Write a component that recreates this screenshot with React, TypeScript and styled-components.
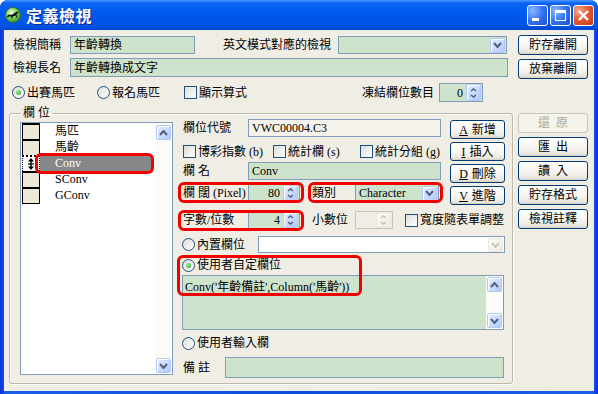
import React from "react";
import styled, { createGlobalStyle, css } from "styled-components";

const GREEN = "#cee3cc";
const FACE = "#f0ede4";
const EDGE = "#7f9db9";

const GlobalStyle = createGlobalStyle`
  * { box-sizing: border-box; }
  html, body { margin: 0; padding: 0; background: #ffffff; }
  body {
    font-family: "Liberation Serif", "Noto Sans CJK TC", serif;
    font-size: 12px;
    line-height: 14px;
    color: #000;
  }
`;

type ChevronProps = { dir: "up" | "down"; color?: string; small?: boolean };

const Chevron = ({ dir, color = "#4d6185", small }: ChevronProps) => {
  const w = small ? 7 : 9;
  const h = small ? 4 : 6;
  const d =
    dir === "down"
      ? `M1 1 L${w / 2} ${h - 1} L${w - 1} 1`
      : `M1 ${h - 1} L${w / 2} 1 L${w - 1} ${h - 1}`;
  return (
    <svg width={w} height={h} viewBox={`0 0 ${w} ${h}`}>
      <path d={d} fill="none" stroke={color} strokeWidth={small ? 1.6 : 2} />
    </svg>
  );
};

const AppIcon = () => (
  <svg width="16" height="16" viewBox="0 0 16 16">
    <defs>
      <radialGradient id="ic" cx="0.4" cy="0.35" r="0.7">
        <stop offset="0" stopColor="#f4ffd8" />
        <stop offset="0.5" stopColor="#7fd45a" />
        <stop offset="1" stopColor="#2f8a2a" />
      </radialGradient>
    </defs>
    <circle cx="8" cy="8" r="7.5" fill="url(#ic)" stroke="#3a6b2a" strokeWidth="0.8" />
    <path
      d="M2 9 L4 7.5 L6 8 L9 6.5 L11 5 L13 4.5 L13.5 6 L12 6.5 L11.5 8 L12.5 10.5 L11.5 10.5 L10.5 8.5 L8 9.5 L7 11.5 L6 11.5 L6.5 9.5 L4 9.5 L2.5 10.5 Z"
      fill="#111"
    />
  </svg>
);

const RowMarker = () => (
  <svg width="8" height="12" viewBox="0 0 8 12">
    <path d="M4 0 L7 3.5 L1 3.5 Z M4 12 L7 8.5 L1 8.5 Z" fill="#000" />
    <rect x="3.3" y="3" width="1.4" height="6" fill="#000" />
    <rect x="1" y="5.4" width="6" height="1.2" fill="#000" />
  </svg>
);

/* ---------- window chrome ---------- */

const Window = styled.div`
  width: 598px;
  height: 394px;
  display: flex;
  flex-direction: column;
  background: linear-gradient(90deg, #0831d9 0%, #1a5fe8 1%, #0a4fdc 50%, #1a5fe8 99%, #0831d9 100%);
  border-radius: 8px 8px 0 0;
  overflow: hidden;
`;

const TitleBar = styled.div`
  height: 30px;
  flex: none;
  display: flex;
  align-items: center;
  padding: 0 4px 0 5px;
  gap: 5px;
  background: linear-gradient(
    180deg,
    #4a9aff 0%,
    #0d63f3 10%,
    #0058ee 45%,
    #0055e6 85%,
    #0046d2 100%
  );
`;

const Title = styled.div`
  flex: 1;
  color: #fff;
  font-family: "Noto Sans CJK TC", sans-serif;
  font-weight: bold;
  font-size: 16px;
  line-height: 20px;
  letter-spacing: 0.5px;
  text-shadow: 1px 1px 0 #0b2590;
`;

const Caption = styled.div`
  display: flex;
  gap: 2px;
  margin-top: 1px;
`;

const CaptionButton = styled.div<{ $close?: boolean }>`
  width: 21px;
  height: 21px;
  border: 1px solid #fff;
  border-radius: 3px;
  display: flex;
  align-items: center;
  justify-content: center;
  background: ${(p) =>
    p.$close
      ? "radial-gradient(circle at 25% 25%, #f5a88a 0%, #e2582f 50%, #c33b12 100%)"
      : "radial-gradient(circle at 25% 25%, #8cb8ff 0%, #3573f2 50%, #1d4fd0 100%)"};
`;

const Client = styled.div`
  flex: 1;
  margin: 0 4px 3px 4px;
  background: ${FACE};
  display: flex;
`;

const MainCol = styled.div`
  width: 514px;
  flex: none;
  display: flex;
  flex-direction: column;
  padding: 6px 0 0 9px;
`;

const SideCol = styled.div`
  width: 70px;
  flex: none;
  display: flex;
  flex-direction: column;
  gap: 4px;
  padding-top: 5px;
`;

/* ---------- form parts ---------- */

const Row = styled.div<{ $h: number; $mt?: number }>`
  display: flex;
  align-items: center;
  height: ${(p) => p.$h}px;
  margin-top: ${(p) => p.$mt ?? 0}px;
  flex: none;
`;

const Label = styled.div<{ $w: number; $ml?: number; $pl?: number }>`
  width: ${(p) => p.$w}px;
  margin-left: ${(p) => p.$ml ?? 0}px;
  padding-left: ${(p) => p.$pl ?? 0}px;
  flex: none;
  white-space: nowrap;
`;

const Field = styled.div<{ $w: number; $h: number; $bg?: string; $edge?: string; $ml?: number }>`
  width: ${(p) => p.$w}px;
  height: ${(p) => p.$h}px;
  margin-left: ${(p) => p.$ml ?? 0}px;
  flex: none;
  border: 1px solid ${(p) => p.$edge ?? EDGE};
  background: ${(p) => p.$bg ?? GREEN};
  display: flex;
  align-items: center;
  padding: 0 1px 0 3px;
  white-space: nowrap;
  overflow: hidden;
`;

const FieldText = styled.span<{ $right?: boolean }>`
  flex: 1;
  text-align: ${(p) => (p.$right ? "right" : "left")};
  padding-right: ${(p) => (p.$right ? 3 : 0)}px;
`;

const XPArrowBox = styled.div<{ $w?: number; $h?: number; $disabled?: boolean }>`
  width: ${(p) => p.$w ?? 15}px;
  height: ${(p) => p.$h ?? 15}px;
  flex: none;
  border-radius: 2px;
  display: flex;
  flex-direction: column;
  align-items: center;
  justify-content: center;
  gap: 2px;
  ${(p) =>
    p.$disabled
      ? css`
          border: 1px solid #e8e6dd;
          background: linear-gradient(135deg, #fbfbf8, #edebe3);
        `
      : css`
          border: 1px solid #b4c8f6;
          background: linear-gradient(135deg, #e6eeff 0%, #c7d8fc 60%, #b4c9f7 100%);
          box-shadow: inset 1px 1px 0 #ffffff;
        `}
`;

type ComboProps = { w: number; h: number; value?: string; bg?: string; disabled?: boolean; ml?: number };

const Combo = ({ w, h, value, bg, disabled, ml }: ComboProps) => (
  <Field $w={w} $h={h} $bg={bg} $ml={ml}>
    <FieldText>{value}</FieldText>
    <XPArrowBox $h={h - 3} $disabled={disabled}>
      <Chevron dir="down" color={disabled ? "#c9c7ba" : "#4d6185"} />
    </XPArrowBox>
  </Field>
);

type SpinProps = { w: number; h: number; value?: string; disabled?: boolean; ml?: number };

const Spin = ({ w, h, value, disabled, ml }: SpinProps) => (
  <Field $w={w} $h={h} $ml={ml} $bg={disabled ? FACE : GREEN} $edge={disabled ? "#c9c7ba" : EDGE}>
    <FieldText $right>{value}</FieldText>
    <XPArrowBox $h={h - 2} $disabled={disabled}>
      <Chevron dir="up" small color={disabled ? "#c9c7ba" : "#4d6185"} />
      <Chevron dir="down" small color={disabled ? "#c9c7ba" : "#4d6185"} />
    </XPArrowBox>
  </Field>
);

const Choice = styled.div<{ $w?: number; $ml?: number }>`
  display: flex;
  align-items: center;
  gap: 2px;
  flex: none;
  width: ${(p) => (p.$w ? `${p.$w}px` : "auto")};
  margin-left: ${(p) => p.$ml ?? 0}px;
  white-space: nowrap;
`;

const RadioDot = styled.span<{ $checked?: boolean }>`
  width: 13px;
  height: 13px;
  flex: none;
  border-radius: 50%;
  border: 1px solid #1c5180;
  background: linear-gradient(135deg, #dcdcd7 0%, #ffffff 100%);
  display: flex;
  align-items: center;
  justify-content: center;
  &::after {
    content: "";
    width: 5px;
    height: 5px;
    border-radius: 50%;
    background: radial-gradient(circle at 35% 35%, #9ff09f, #21a121);
    display: ${(p) => (p.$checked ? "block" : "none")};
  }
`;

const CheckBox = styled.span`
  width: 13px;
  height: 13px;
  flex: none;
  border: 1px solid #1c5180;
  background: linear-gradient(135deg, #dcdcd7 0%, #ffffff 100%);
`;

const Button = styled.div<{ $w?: number; $h?: number; $disabled?: boolean }>`
  width: ${(p) => p.$w ?? 70}px;
  height: ${(p) => p.$h ?? 20}px;
  flex: none;
  border-radius: 3px;
  display: flex;
  align-items: center;
  justify-content: center;
  white-space: pre;
  ${(p) =>
    p.$disabled
      ? css`
          border: 1px solid #c9c7ba;
          background: #f5f4ea;
          color: #aca899;
        `
      : css`
          border: 1px solid #003c74;
          background: linear-gradient(180deg, #ffffff 0%, #f6f5f0 55%, #ebe8de 85%, #d8d2c6 100%);
          color: #000;
        `}
`;

const Mark = styled.div<{ $inset: string; $ml?: number }>`
  position: relative;
  display: flex;
  align-items: center;
  flex: none;
  margin-left: ${(p) => p.$ml ?? 0}px;
  &::after {
    content: "";
    position: absolute;
    inset: ${(p) => p.$inset};
    border: 3px solid #f20000;
    border-radius: 6px;
    pointer-events: none;
  }
`;

/* ---------- group box ---------- */

const Group = styled.fieldset`
  margin: 4px 0 0 -4px;
  width: 504px;
  height: 278px;
  border: 1px solid #bcb8aa;
  border-radius: 3px;
  box-shadow: 1px 1px 0 #ffffff, inset 1px 1px 0 #ffffff;
  padding: 0 7px 0 10px;
  display: flex;
  min-width: 0;
`;

const Legend = styled.legend`
  padding: 0 2px;
  margin-left: 1px;
  line-height: 14px;
  white-space: pre;
`;

const ListBox = styled.div`
  width: 153px;
  height: 253px;
  margin-top: 2px;
  flex: none;
  border: 1px solid ${EDGE};
  background: #fff;
  display: flex;
`;

const ListRows = styled.div`
  flex: 1;
  padding-left: 1px;
  display: flex;
  flex-direction: column;
`;

const ListRow = styled.div`
  display: flex;
  height: 16px;
`;

const RowHead = styled.div<{ $current?: boolean; $last?: boolean }>`
  width: 18px;
  height: ${(p) => (p.$last ? 17 : 16)}px;
  flex: none;
  background: #ece9d8;
  border: 1px solid #000;
  border-top-width: 2px;
  border-bottom-width: ${(p) => (p.$last ? 1 : 0)}px;
  display: flex;
  align-items: center;
  justify-content: center;
  ${(p) =>
    p.$current &&
    css`
      background: #ffffff;
      border-style: dotted;
    `}
`;

const RowText = styled.div<{ $selected?: boolean }>`
  width: 112px;
  height: 16px;
  padding-left: 15px;
  display: flex;
  align-items: center;
  background: ${(p) => (p.$selected ? "#878787" : "transparent")};
  color: ${(p) => (p.$selected ? "#ffffff" : "#000")};
`;

const VScroll = styled.div`
  width: 17px;
  flex: none;
  background: #fbfbf8;
  display: flex;
  flex-direction: column;
  justify-content: space-between;
  align-items: center;
  padding: 2px 0 1px;
`;

const RightArea = styled.div`
  width: 323px;
  margin-left: 9px;
  margin-top: -1px;
  display: flex;
  flex-direction: column;
`;

const TopBlock = styled.div`
  display: flex;
`;

const FieldsCol = styled.div`
  width: 259px;
  display: flex;
  flex-direction: column;
`;

const ActionCol = styled.div`
  margin: 1px 0 0 9px;
  display: flex;
  flex-direction: column;
  gap: 3px;
`;

const Memo = styled.div`
  width: 322px;
  height: 55px;
  margin-top: 2px;
  flex: none;
  border: 1px solid ${EDGE};
  background: ${GREEN};
  display: flex;
`;

const MemoText = styled.div`
  flex: 1;
  padding: 4px 0 0 2px;
  white-space: nowrap;
`;

const MemoScroll = styled(VScroll)`
  padding: 1px 0 1px;
`;

const Key = styled.span`
  text-decoration: underline;
  margin-right: 4px;
`;

const listItems = ["馬匹", "馬齡", "Conv", "SConv", "GConv"];

export default function App() {
  return (
    <>
      <GlobalStyle />
      <Window>
        <TitleBar>
          <AppIcon />
          <Title>定義檢視</Title>
          <Caption>
            <CaptionButton>
              <svg width="19" height="19" viewBox="0 0 19 19">
                <rect x="4" y="12" width="7" height="3" fill="#fff" />
              </svg>
            </CaptionButton>
            <CaptionButton>
              <svg width="19" height="19" viewBox="0 0 19 19">
                <rect x="4.5" y="4.5" width="10" height="10" fill="none" stroke="#fff" strokeWidth="1" />
                <rect x="4" y="4" width="11" height="3" fill="#fff" />
              </svg>
            </CaptionButton>
            <CaptionButton $close>
              <svg width="19" height="19" viewBox="0 0 19 19">
                <path d="M5 5 L14 14 M14 5 L5 14" stroke="#fff" strokeWidth="2.4" />
              </svg>
            </CaptionButton>
          </Caption>
        </TitleBar>

        <Client>
          <MainCol>
            <Row $h={18}>
              <Label $w={57}>檢視簡稱</Label>
              <Field $w={125} $h={18}>年齡轉換</Field>
              <Label $w={115} $ml={28}>英文模式對應的檢視</Label>
              <Combo w={169} h={18} />
            </Row>
            <Row $h={19} $mt={4}>
              <Label $w={57}>檢視長名</Label>
              <Field $w={438} $h={19}>年齡轉換成文字</Field>
            </Row>
            <Row $h={19} $mt={6}>
              <Choice $w={85} $ml={-1}>
                <RadioDot $checked />
                出賽馬匹
              </Choice>
              <Choice $w={87}>
                <RadioDot />
                報名馬匹
              </Choice>
              <Choice $w={178}>
                <CheckBox />
                顯示算式
              </Choice>
              <Label $w={77}>凍結欄位數目</Label>
              <Spin w={44} h={19} value="0" />
            </Row>

            <Group>
              <Legend>欄 位</Legend>
              <ListBox>
                <ListRows>
                  {listItems.map((item, i) => (
                    <ListRow key={item}>
                      <RowHead $current={i === 2} $last={i === listItems.length - 1}>
                        {i === 2 && <RowMarker />}
                      </RowHead>
                      {i === 2 ? (
                        <Mark $inset="-2px -2px -3px -5px">
                          <RowText $selected>{item}</RowText>
                        </Mark>
                      ) : (
                        <RowText>{item}</RowText>
                      )}
                    </ListRow>
                  ))}
                </ListRows>
                <VScroll>
                  <XPArrowBox>
                    <Chevron dir="up" />
                  </XPArrowBox>
                  <XPArrowBox>
                    <Chevron dir="down" />
                  </XPArrowBox>
                </VScroll>
              </ListBox>

              <RightArea>
                <TopBlock>
                  <FieldsCol>
                    <Row $h={18}>
                      <Label $w={66} $pl={1}>欄位代號</Label>
                      <Field $w={193} $h={18} $bg="#f4f2ea">VWC00004.C3</Field>
                    </Row>
                    <Row $h={19} $mt={5}>
                      <Choice $w={90} $ml={1}>
                        <CheckBox />
                        博彩指數 (b)
                      </Choice>
                      <Choice $w={87}>
                        <CheckBox />
                        統計欄 (s)
                      </Choice>
                      <Choice>
                        <CheckBox />
                        統計分組 (g)
                      </Choice>
                    </Row>
                    <Row $h={18} $mt={1}>
                      <Label $w={66} $pl={1}>欄 名</Label>
                      <Field $w={193} $h={18}>Conv</Field>
                    </Row>
                    <Row $h={18} $mt={4}>
                      <Mark $inset="-2px -4px -1px -4px">
                        <Label $w={66} $pl={1}>欄 闊 (Pixel)</Label>
                        <Spin w={52} h={18} value="80" />
                      </Mark>
                      <Mark $inset="-2px -4px -1px -4px" $ml={12}>
                        <Label $w={43}>類別</Label>
                        <Combo w={84} h={18} value="Character" />
                      </Mark>
                    </Row>
                  </FieldsCol>
                  <ActionCol>
                    <Button $w={55} $h={19}>
                      <Key>A</Key>新增
                    </Button>
                    <Button $w={55} $h={19}>
                      <Key>I</Key>插入
                    </Button>
                    <Button $w={55} $h={19}>
                      <Key>D</Key>刪除
                    </Button>
                    <Button $w={55} $h={19}>
                      <Key>V</Key>進階
                    </Button>
                  </ActionCol>
                </TopBlock>

                <Row $h={18} $mt={6}>
                  <Mark $inset="-1px -4px -2px -4px">
                    <Label $w={66} $pl={1}>字數/位數</Label>
                    <Spin w={52} h={18} value="4" />
                  </Mark>
                  <Label $w={43} $ml={12}>小數位</Label>
                  <Spin w={38} h={18} disabled />
                  <Choice $ml={12}>
                    <CheckBox />
                    寬度隨表單調整
                  </Choice>
                </Row>

                <Row $h={17} $mt={7}>
                  <Choice $w={76}>
                    <RadioDot />
                    內置欄位
                  </Choice>
                  <Combo w={247} h={17} bg="#ffffff" disabled />
                </Row>

                <Row $h={16} $mt={4}>
                  <Mark $inset="-3px -2px -24px -5px">
                    <Choice $w={178}>
                      <RadioDot $checked />
                      使用者自定欄位
                    </Choice>
                  </Mark>
                </Row>

                <Memo>
                  <MemoText>Conv('年齡備註',Column('馬齡'))</MemoText>
                  <MemoScroll>
                    <XPArrowBox>
                      <Chevron dir="up" />
                    </XPArrowBox>
                    <XPArrowBox>
                      <Chevron dir="down" />
                    </XPArrowBox>
                  </MemoScroll>
                </Memo>

                <Row $h={16} $mt={5}>
                  <Choice>
                    <RadioDot />
                    使用者輸入欄
                  </Choice>
                </Row>

                <Row $h={21} $mt={6}>
                  <Label $w={43} $pl={1}>備 註</Label>
                  <Field $w={279} $h={21} />
                </Row>
              </RightArea>
            </Group>
          </MainCol>

          <SideCol>
            <Button>貯存離開</Button>
            <Button>放棄離開</Button>
            <Button $disabled style={{ marginTop: 30 }}>
              {"還\u2002原"}
            </Button>
            <Button>{"匯\u2002出"}</Button>
            <Button>{"讀\u2002入"}</Button>
            <Button>貯存格式</Button>
            <Button>檢視註釋</Button>
          </SideCol>
        </Client>
      </Window>
    </>
  );
}
